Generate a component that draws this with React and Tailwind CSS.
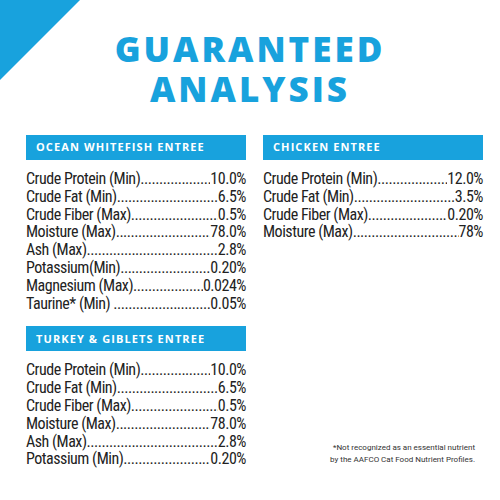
import React from 'react';

const ocean = [
  ['Crude Protein (Min)', '10.0%'],
  ['Crude Fat (Min)', '6.5%'],
  ['Crude Fiber (Max)', '0.5%'],
  ['Moisture (Max)', '78.0%'],
  ['Ash (Max)', '2.8%'],
  ['Potassium(Min)', '0.20%'],
  ['Magnesium (Max)', '0.024%'],
  ['Taurine* (Min) ', '0.05%'],
];

const turkey = [
  ['Crude Protein (Min)', '10.0%'],
  ['Crude Fat (Min)', '6.5%'],
  ['Crude Fiber (Max)', '0.5%'],
  ['Moisture (Max)', '78.0%'],
  ['Ash (Max)', '2.8%'],
  ['Potassium (Min)', '0.20%'],
];

const chicken = [
  ['Crude Protein (Min)', '12.0%'],
  ['Crude Fat (Min)', '3.5%'],
  ['Crude Fiber (Max)', '0.20%'],
  ['Moisture (Max)', '78%'],
];

const DOTS = '.'.repeat(120);

// one nutrient line with a dot leader
const Row = ({ label, value }) => (
  <div className="flex items-baseline whitespace-nowrap h-[17.8px] leading-[17.8px]">
    <span className="whitespace-pre">{label}</span>
    <span className="flex-1 min-w-0 overflow-hidden">{DOTS}</span>
    <span>{value}</span>
  </div>
);

const Panel = ({ title, rows }) => (
  <div>
    <div className="h-[25px] bg-[#18a2dd] flex items-center pl-[10px] text-white text-[11px] font-bold tracking-[0.1em] font-['Open_Sans',sans-serif]">
      {title}
    </div>
    <div className="mt-[10px] text-[16px] text-[#222] tracking-[-0.03em] font-['Liberation_Sans_Narrow','Roboto_Condensed','Roboto',sans-serif]">
      {rows.map(([l, v]) => (
        <Row key={l} label={l} value={v} />
      ))}
    </div>
  </div>
);

const App = () => {
  return (
    <div className="w-[500px] h-[500px] bg-white relative overflow-hidden">
      {/* corner triangle */}
      <svg className="absolute top-0 left-0" width="80" height="80" viewBox="0 0 80 80">
        <polygon points="0,0 80,0 0,80" fill="#18a2dd" />
      </svg>

      <h1 className="pt-[29px] text-center text-[#18a2dd] text-[35px] leading-[40px] font-extrabold tracking-[0.085em] font-['Open_Sans',sans-serif]">
        GUARANTEED
        <br />
        ANALYSIS
      </h1>

      <div className="grid grid-cols-2 gap-[17px] pl-[26px] pr-[17px] mt-[26px] h-[340px]">
        <div className="flex flex-col">
          <Panel title="OCEAN WHITEFISH ENTREE" rows={ocean} />
          <div className="mt-[14px]">
            <Panel title="TURKEY & GIBLETS ENTREE" rows={turkey} />
          </div>
        </div>
        <div className="flex flex-col">
          <Panel title="CHICKEN ENTREE" rows={chicken} />
          <p className="mt-auto mb-[9px] pr-[8px] text-right text-[8px] leading-[12px] text-[#333] font-['Roboto',sans-serif]">
            *Not recognized as an essential nutrient
            <br />
            by the AAFCO Cat Food Nutrient Profiles.
          </p>
        </div>
      </div>
    </div>
  );
};

export default App;
